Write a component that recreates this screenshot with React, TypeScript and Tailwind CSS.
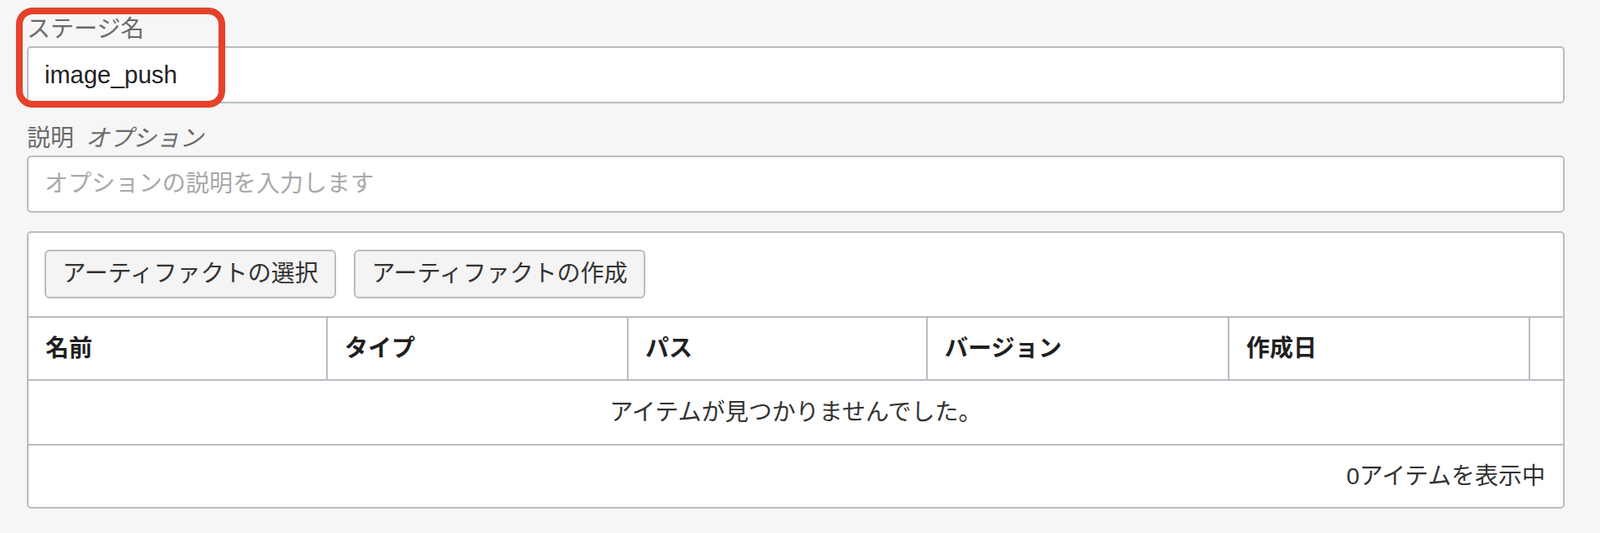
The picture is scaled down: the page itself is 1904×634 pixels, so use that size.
import React from "react"

const columns = [
  { label: "名前", width: "w-[356px]" },
  { label: "タイプ", width: "w-[358px]" },
  { label: "パス", width: "w-[356px]" },
  { label: "バージョン", width: "w-[359px]" },
  { label: "作成日", width: "w-[358px]" },
]

export default function App() {
  return (
    <div className="relative min-h-[634px] bg-[#f6f6f6] pl-[32px] pr-[42px] pt-[19px] font-['Liberation_Sans','Noto_Sans_CJK_JP',sans-serif] text-[28px]">
      {/* highlight around the stage name */}
      <div className="pointer-events-none absolute left-[19px] top-[9px] h-[119px] w-[249px] rounded-[20px] border-[8px] border-[#e5422b]" />

      <div className="h-[32px] leading-[32px] text-[#6b6b6b]">ステージ名</div>
      <input
        readOnly
        defaultValue="image_push"
        className="mt-[4px] block h-[68px] w-full rounded-[5px] border-2 border-[#b8bdc3] bg-white pl-[19px] text-[29px] text-[#222] outline-none"
      />

      <div className="mt-[26px] h-[32px] leading-[32px] text-[#6b6b6b]">
        説明<span className="ml-[14px] italic">オプション</span>
      </div>
      <input
        readOnly
        placeholder="オプションの説明を入力します"
        className="mt-[4px] block h-[68px] w-full rounded-[5px] border-2 border-[#b8bdc3] bg-white pl-[19px] text-[#222] outline-none placeholder:text-[#a9a9a9]"
      />

      <div className="mt-[22px] rounded-[5px] border-2 border-[#b8bdc3] bg-white">
        <div className="flex gap-[21px] border-b-2 border-[#b8bdc3] px-[19px] pt-[20px] pb-[21px]">
          <button className="h-[58px] w-[347px] rounded-[6px] border-2 border-[#b8bdc3] bg-[#f4f4f4] text-[#333]">
            アーティファクトの選択
          </button>
          <button className="h-[58px] w-[347px] rounded-[6px] border-2 border-[#b8bdc3] bg-[#f4f4f4] text-[#333]">
            アーティファクトの作成
          </button>
        </div>

        <div className="flex h-[75px] border-b-2 border-[#b8bdc3]">
          {columns.map((c) => (
            <div
              key={c.label}
              className={`${c.width} flex items-center border-r-2 border-[#b8bdc3] px-[20px] font-bold text-[#1f1f1f]`}
            >
              {c.label}
            </div>
          ))}
          <div className="flex-1" />
        </div>

        <div className="flex h-[77px] items-center justify-center border-b-2 border-[#b8bdc3] text-[#333]">
          アイテムが見つかりませんでした。
        </div>

        <div className="flex h-[73px] items-center justify-end pr-[21px] text-[#333]">
          0アイテムを表示中
        </div>
      </div>
    </div>
  )
}
